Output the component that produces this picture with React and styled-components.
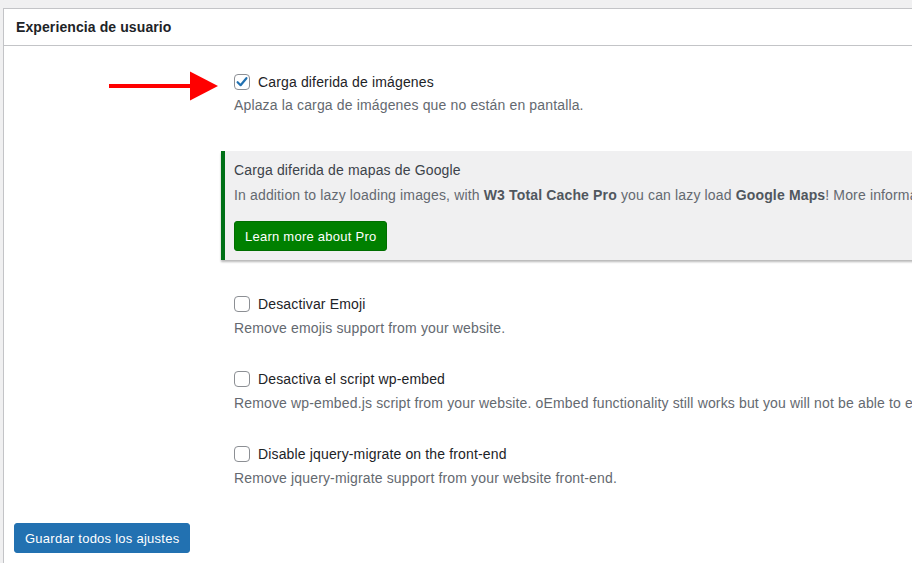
import React from "react";
import styled, { createGlobalStyle } from "styled-components";

const GlobalStyle = createGlobalStyle`
  html, body {
    margin: 0;
    padding: 0;
    background: #f0f0f1;
    overflow: hidden;
  }
  body {
    font-family: "Liberation Sans", Arial, sans-serif;
    font-size: 14px;
    letter-spacing: 0.15px;
    color: #3c434a;
  }
`;

const Page = styled.div`
  position: relative;
  width: 912px;
  height: 563px;
  padding: 8px 0 0 3px;
  box-sizing: border-box;
  overflow: hidden;
`;

const Panel = styled.section`
  width: 1100px;
  min-height: 600px;
  background: #fff;
  border: 1px solid #c3c4c7;
  box-sizing: border-box;
`;

const PanelHeader = styled.h2`
  margin: 0;
  height: 36px;
  padding: 0 12px;
  display: flex;
  align-items: center;
  border-bottom: 1px solid #c3c4c7;
  font-size: 14px;
  font-weight: 600;
  letter-spacing: 0.1px;
  color: #1d2327;
`;

const PanelBody = styled.div`
  padding: 26px 0 0 10px;
`;

const SettingsGrid = styled.div`
  display: grid;
  grid-template-columns: 207px 1fr;
`;

const Options = styled.div`
  display: flex;
  flex-direction: column;
`;

const Option = styled.div`
  padding-left: 13px;
  margin-bottom: ${(p) => p.$gap}px;
`;

const CheckRow = styled.label`
  display: flex;
  align-items: center;
  gap: 8px;
  height: 20px;
  line-height: 20px;
  color: #1d2327;
`;

const Box = styled.span`
  width: 16px;
  height: 16px;
  box-sizing: border-box;
  border: 1px solid #8c8f94;
  border-radius: 4px;
  background: #fff;
  display: flex;
  align-items: center;
  justify-content: center;
  flex-shrink: 0;
`;

const Description = styled.p`
  margin: ${(p) => p.$top}px 0 0;
  line-height: 20px;
  color: #646970;
  white-space: nowrap;
`;

const Notice = styled.div`
  border-left: 4px solid #007017;
  background: #f0f0f1;
  box-shadow: 0 2px 2px rgba(0, 0, 0, 0.28);
  padding: 9px 0 9px 9px;
  margin-bottom: 34px;
`;

const NoticeTitle = styled.div`
  line-height: 20px;
  color: #3c434a;
`;

const NoticeText = styled.p`
  margin: 5px 0 0;
  line-height: 20px;
  color: #646970;
  white-space: nowrap;

  strong {
    font-weight: 700;
    color: #50575e;
  }
`;

const Button = styled.button`
  display: inline-flex;
  align-items: center;
  height: 30px;
  padding: 0 10px;
  border-radius: 3px;
  border: 1px solid ${(p) => p.$border};
  background: ${(p) => p.$bg};
  color: #fff;
  font-family: inherit;
  font-size: 13px;
  font-weight: 400;
  letter-spacing: 0.25px;
  cursor: pointer;
`;

const NoticeButton = styled(Button)`
  margin-top: 16px;
`;

const Footer = styled.div`
  margin-top: 35px;
`;

const Arrow = styled.svg`
  position: absolute;
  left: 108px;
  top: 70px;
`;

const Check = ({ checked }) => (
  <Box>
    {checked && (
      <svg width="14" height="14" viewBox="0 0 14 14">
        <path
          d="M2.6 7.2 L5.6 10.2 L11.4 3.2"
          fill="none"
          stroke="#2271b1"
          strokeWidth="2.2"
          strokeLinecap="round"
          strokeLinejoin="round"
        />
      </svg>
    )}
  </Box>
);

const options = [
  {
    label: "Desactivar Emoji",
    desc: "Remove emojis support from your website.",
    top: 4,
    gap: 31,
  },
  {
    label: "Desactiva el script wp-embed",
    desc:
      "Remove wp-embed.js script from your website. oEmbed functionality still works but you will not be able to embed other WordPress posts on your pages.",
    top: 4,
    gap: 31,
  },
  {
    label: "Disable jquery-migrate on the front-end",
    desc: "Remove jquery-migrate support from your website front-end.",
    top: 4,
    gap: 0,
  },
];

const App = () => (
  <Page>
    <GlobalStyle />
    <Panel>
      <PanelHeader>Experiencia de usuario</PanelHeader>
      <PanelBody>
        <SettingsGrid>
          <div />
          <Options>
            <Option $gap={36}>
              <CheckRow>
                <Check checked />
                Carga diferida de imágenes
              </CheckRow>
              <Description $top={3}>
                Aplaza la carga de imágenes que no están en pantalla.
              </Description>
            </Option>

            <Notice>
              <NoticeTitle>Carga diferida de mapas de Google</NoticeTitle>
              <NoticeText>
                In addition to lazy loading images, with{" "}
                <strong>W3 Total Cache Pro</strong> you can lazy load{" "}
                <strong>Google Maps</strong>! More information and settings can
                be found on the Pro page.
              </NoticeText>
              <NoticeButton $bg="#008000" $border="#006e00">
                Learn more about Pro
              </NoticeButton>
            </Notice>

            {options.map((o, i) => (
              <Option key={i} $gap={o.gap}>
                <CheckRow>
                  <Check />
                  {o.label}
                </CheckRow>
                <Description $top={o.top}>{o.desc}</Description>
              </Option>
            ))}
          </Options>
        </SettingsGrid>
        <Footer>
          <Button $bg="#2271b1" $border="#2271b1">
            Guardar todos los ajustes
          </Button>
        </Footer>
      </PanelBody>
    </Panel>

    <Arrow width="112" height="31" viewBox="0 0 112 31">
      <rect x="1" y="14" width="84" height="4" fill="#f00" />
      <polygon points="82,1.5 110,16 82,30.5" fill="#f00" />
    </Arrow>
  </Page>
);

export default App;
